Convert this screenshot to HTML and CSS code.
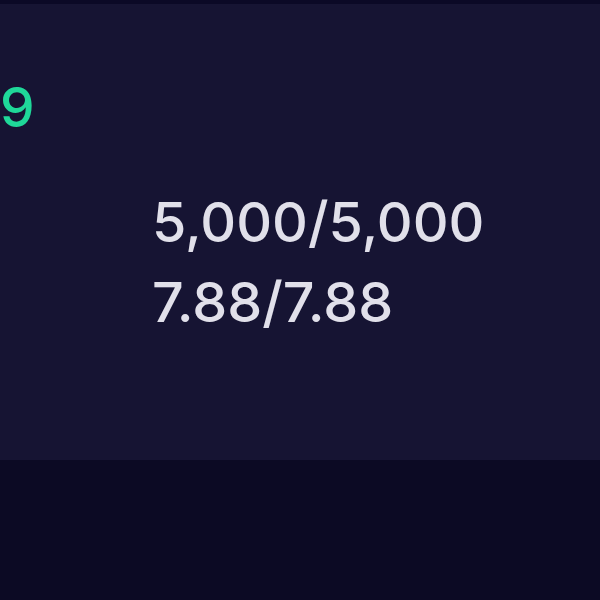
FILE: index.html
```html
<!DOCTYPE html>
<html>
<head>
<meta charset="utf-8">
<link rel="stylesheet" href="styles.css">
</head>
<body>
<div class="topbar"></div>
<main class="panel">
  <div class="change">9</div>
  <div class="values">
    <div class="value">5,000/5,000</div>
    <div class="value">7.88/7.88</div>
  </div>
</main>
<footer class="footer"></footer>
</body>
</html>
```

FILE: styles.css
```css
html, body {
  margin: 0;
  padding: 0;
  background: #0c0a24;
  font-family: Inter, "Liberation Sans", sans-serif;
}
.topbar {
  height: 4px;
  background: #0b0926;
}
.panel {
  height: 456px;
  box-sizing: border-box;
  background: #161433;
  padding-top: 63px;
}
.change {
  font-size: 55px;
  font-weight: 500;
  line-height: 80px;
  color: #1fd899;
}
.values {
  margin-top: 35px;
  padding-left: 152px;
}
.value {
  font-size: 55.6px;
  font-weight: 500;
  line-height: 80px;
  color: #e1e0ea;
}
.footer {
  height: 140px;
  background: #0c0a24;
}
```
